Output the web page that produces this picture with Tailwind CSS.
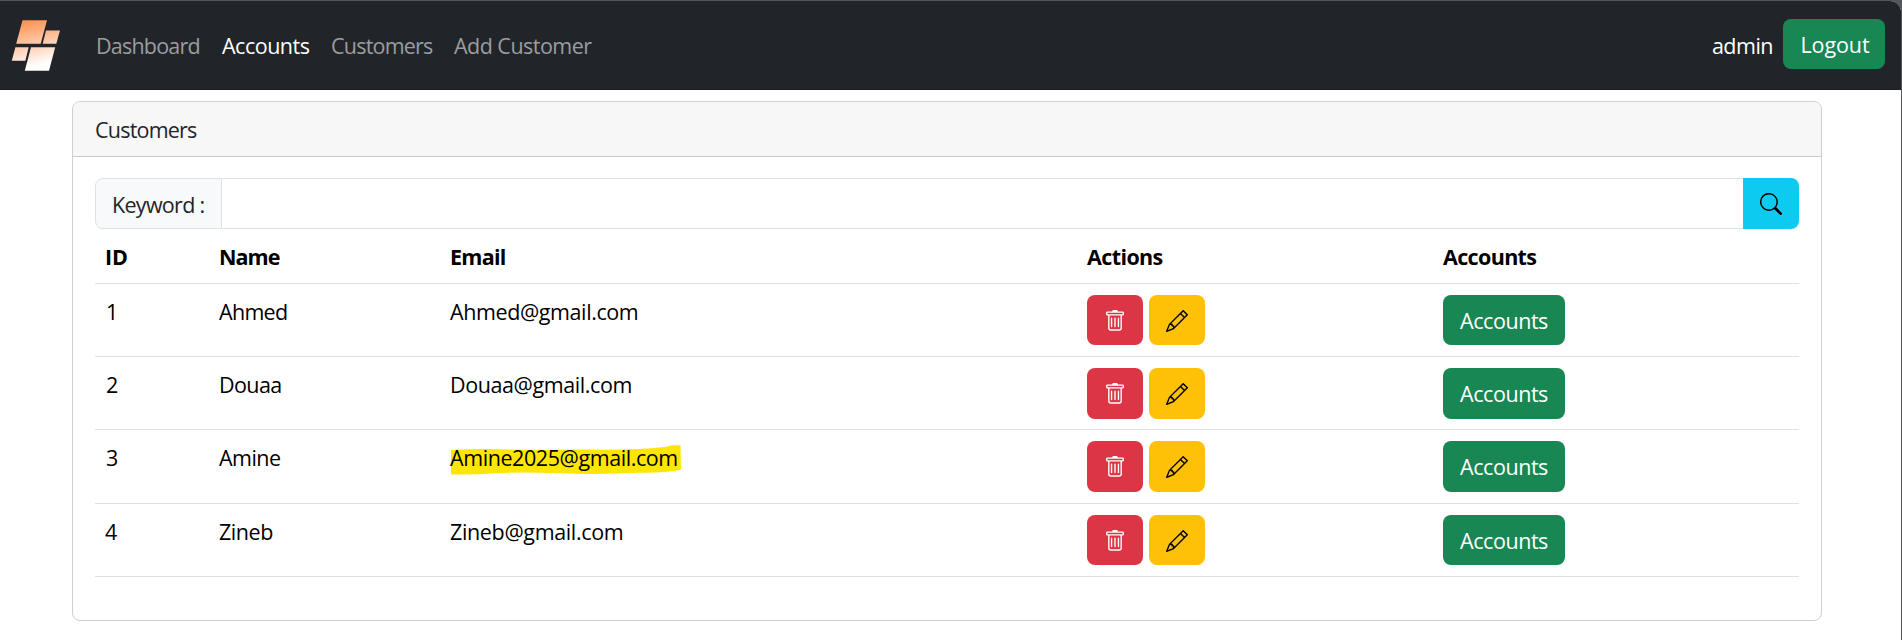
<!DOCTYPE html>
<html lang="en">
<head>
<meta charset="utf-8">
<title>Customers</title>
<script src="https://cdn.jsdelivr.net/npm/@tailwindcss/browser@4"></script>
</head>
<body class="h-[640px] overflow-hidden bg-[#55565b] pt-px pr-px font-['Open_Sans',sans-serif] text-[21.5px] leading-[33px] text-black">
<svg class="hidden">
  <symbol id="trash" viewBox="0 0 16 16"><path d="M5.5 5.5A.5.5 0 0 1 6 6v6a.5.5 0 0 1-1 0V6a.5.5 0 0 1 .5-.5m2.5 0a.5.5 0 0 1 .5.5v6a.5.5 0 0 1-1 0V6a.5.5 0 0 1 .5-.5m3 .5a.5.5 0 0 0-1 0v6a.5.5 0 0 0 1 0z"/><path d="M14.5 3a1 1 0 0 1-1 1H13v9a2 2 0 0 1-2 2H5a2 2 0 0 1-2-2V4h-.5a1 1 0 0 1-1-1V2a1 1 0 0 1 1-1H6a1 1 0 0 1 1-1h2a1 1 0 0 1 1 1h3.5a1 1 0 0 1 1 1zM4.118 4 4 4.059V13a1 1 0 0 0 1 1h6a1 1 0 0 0 1-1V4.059L11.882 4zM2.5 3h11V2h-11z"/></symbol>
  <symbol id="pencil" viewBox="0 0 16 16"><path d="M12.146.146a.5.5 0 0 1 .708 0l3 3a.5.5 0 0 1 0 .708l-10 10a.5.5 0 0 1-.168.11l-5 2a.5.5 0 0 1-.65-.65l2-5a.5.5 0 0 1 .11-.168zM11.207 2.5 13.5 4.793 14.793 3.5 12.5 1.207zm1.586 3L10.5 3.207 4 9.707V10h.5a.5.5 0 0 1 .5.5v.5h.5a.5.5 0 0 1 .5.5v.5h.293zm-9.761 5.175-.106.106-1.528 3.821 3.821-1.528.106-.106A.5.5 0 0 1 5 12.5V12h-.5a.5.5 0 0 1-.5-.5V11h-.5a.5.5 0 0 1-.468-.325"/></symbol>
</svg>
<div class="h-full overflow-hidden rounded-tr-[11px] bg-white">
  <nav class="flex h-[89px] items-center border-b border-[#1a1d20] bg-[#212529] pr-4 text-[#9b9d9f]">
    <svg class="ml-2.5 h-[56px] w-[54px] shrink-0" viewBox="10 17 54 56">
      <defs><linearGradient id="lg" gradientUnits="userSpaceOnUse" x1="29" y1="20" x2="40" y2="69"><stop offset="0" stop-color="#ff9150"/><stop offset=".92" stop-color="#fff"/></linearGradient></defs>
      <g fill="url(#lg)"><path d="M22.5 20.3H47L40.7 43.8H16.2Z"/><path d="M46 30.5H60L56.3 43.8H42.7Z"/><path d="M15.4 47.3H28.7L25.3 60.8H11.8Z"/><path d="M31 47.3H55.2L49 70.8H24.8Z"/></g>
    </svg>
    <div class="flex flex-1 items-center pl-8">
      <a class="w-[126px] tracking-[-0.8px]">Dashboard</a>
      <a class="w-[109px] tracking-[-0.5px] text-white">Accounts</a>
      <a class="w-[123px] tracking-[-0.78px]">Customers</a>
      <a class="tracking-[-0.53px]">Add Customer</a>
    </div>
    <span class="mr-2.5 tracking-[-0.5px] text-white">admin</span>
    <button class="-mt-0.5 h-[50px] w-[102px] rounded-lg bg-[#198754] pt-px pl-0.5 tracking-[-0.1px] text-white">Logout</button>
  </nav>

  <main class="mt-[11px] ml-[72px] h-[520px] w-[1750px] rounded-lg border border-[#cfcfcf]">
    <header class="flex h-[55px] items-center rounded-t-[7px] border-b border-[#cacaca] bg-[#f7f7f7] pl-[22px] tracking-[-0.78px] text-[#212529]">Customers</header>
    <div class="pt-[21px] pr-[22px] pl-[22px]">
      <div class="flex h-[51px]">
        <label class="flex w-[127px] items-center rounded-l-lg border border-[#dee2e6] bg-[#f8f9fa] pt-0.5 pl-4 tracking-[-0.7px] whitespace-nowrap text-[#212529]">Keyword :</label>
        <div class="flex-1 border-y border-[#dee2e6]"></div>
        <button class="flex w-[56px] items-center justify-center rounded-r-lg bg-[#0dcaf0]">
          <svg class="size-[22px]" viewBox="0 0 16 16"><path d="M11.742 10.344a6.5 6.5 0 1 0-1.397 1.398h-.001q.044.06.098.115l3.85 3.85a1 1 0 0 0 1.415-1.414l-3.85-3.85a1 1 0 0 0-.115-.1zM12 6.5a5.5 5.5 0 1 1-11 0 5.5 5.5 0 0 1 11 0"/></svg>
        </button>
      </div>

      <div class="grid h-[55px] grid-cols-[114px_231px_637px_356px_1fr] items-start border-b border-[#dee2e6] pt-[11px] pl-2.5 font-bold">
        <span>ID</span><span class="tracking-[-0.95px]">Name</span><span class="tracking-[-0.75px]">Email</span><span class="tracking-[-0.6px]">Actions</span><span class="tracking-[-0.65px]">Accounts</span>
      </div>

      <div class="grid h-[73px] grid-cols-[114px_231px_637px_356px_1fr] items-start border-b border-[#dee2e6] pt-[11px] pl-2.5">
        <span class="pl-px">1</span><span class="tracking-[-0.7px]">Ahmed</span><span class="tracking-[-0.4px]">Ahmed@gmail.com</span>
        <div class="flex gap-1.5">
          <button class="flex h-[50px] w-[56px] items-center justify-center rounded-lg bg-[#dc3545] pt-0.5 text-white"><svg class="size-[22px] fill-current"><use href="#trash"/></svg></button>
          <button class="flex h-[50px] w-[56px] items-center justify-center rounded-lg bg-[#ffc107] pt-0.5"><svg class="size-[22px] fill-current"><use href="#pencil"/></svg></button>
        </div>
        <button class="h-[50px] w-[122px] rounded-lg bg-[#198754] pt-px tracking-[-0.45px] text-white">Accounts</button>
      </div>

      <div class="grid h-[73px] grid-cols-[114px_231px_637px_356px_1fr] items-start border-b border-[#dee2e6] pt-[11px] pl-2.5">
        <span class="pl-px">2</span><span class="tracking-[-0.6px]">Douaa</span><span class="tracking-[-0.4px]">Douaa@gmail.com</span>
        <div class="flex gap-1.5">
          <button class="flex h-[51px] w-[56px] items-center justify-center rounded-lg bg-[#dc3545] pt-px text-white"><svg class="size-[22px] fill-current"><use href="#trash"/></svg></button>
          <button class="flex h-[51px] w-[56px] items-center justify-center rounded-lg bg-[#ffc107] pt-px"><svg class="size-[22px] fill-current"><use href="#pencil"/></svg></button>
        </div>
        <button class="h-[51px] w-[122px] rounded-lg bg-[#198754] tracking-[-0.45px] text-white">Accounts</button>
      </div>

      <div class="grid h-[74px] grid-cols-[114px_231px_637px_356px_1fr] items-start border-b border-[#dee2e6] pt-[11px] pl-2.5">
        <span class="pl-px">3</span><span class="tracking-[-0.55px]">Amine</span>
        <span class="relative isolate tracking-[-0.42px]">
          <svg class="absolute top-1 left-0 -z-10 h-[30px] w-[234px]" viewBox="450 445 234 30"><path fill="#ffe600" d="M451 450Q475 448.700 500 449.300T590 449.600Q640 450 665 447L672 445.300H680.500L681 469.500Q672 472.500 640 472.800Q600 474.800 560 473.300T497 473.300T451 474.500Z"/></svg>Amine2025@gmail.com</span>
        <div class="flex gap-1.5">
          <button class="flex h-[51px] w-[56px] items-center justify-center rounded-lg bg-[#dc3545] pt-px text-white"><svg class="size-[22px] fill-current"><use href="#trash"/></svg></button>
          <button class="flex h-[51px] w-[56px] items-center justify-center rounded-lg bg-[#ffc107] pt-px"><svg class="size-[22px] fill-current"><use href="#pencil"/></svg></button>
        </div>
        <button class="h-[51px] w-[122px] rounded-lg bg-[#198754] tracking-[-0.45px] text-white">Accounts</button>
      </div>

      <div class="grid h-[73px] grid-cols-[114px_231px_637px_356px_1fr] items-start border-b border-[#dee2e6] pt-[11px] pl-2.5">
        <span>4</span><span class="tracking-[-0.45px]">Zineb</span><span class="tracking-[-0.35px]">Zineb@gmail.com</span>
        <div class="flex gap-1.5">
          <button class="flex h-[50px] w-[56px] items-center justify-center rounded-lg bg-[#dc3545] pt-0.5 text-white"><svg class="size-[22px] fill-current"><use href="#trash"/></svg></button>
          <button class="flex h-[50px] w-[56px] items-center justify-center rounded-lg bg-[#ffc107] pt-0.5"><svg class="size-[22px] fill-current"><use href="#pencil"/></svg></button>
        </div>
        <button class="h-[50px] w-[122px] rounded-lg bg-[#198754] pt-px tracking-[-0.45px] text-white">Accounts</button>
      </div>
    </div>
  </main>
</div>
</body>
</html>
